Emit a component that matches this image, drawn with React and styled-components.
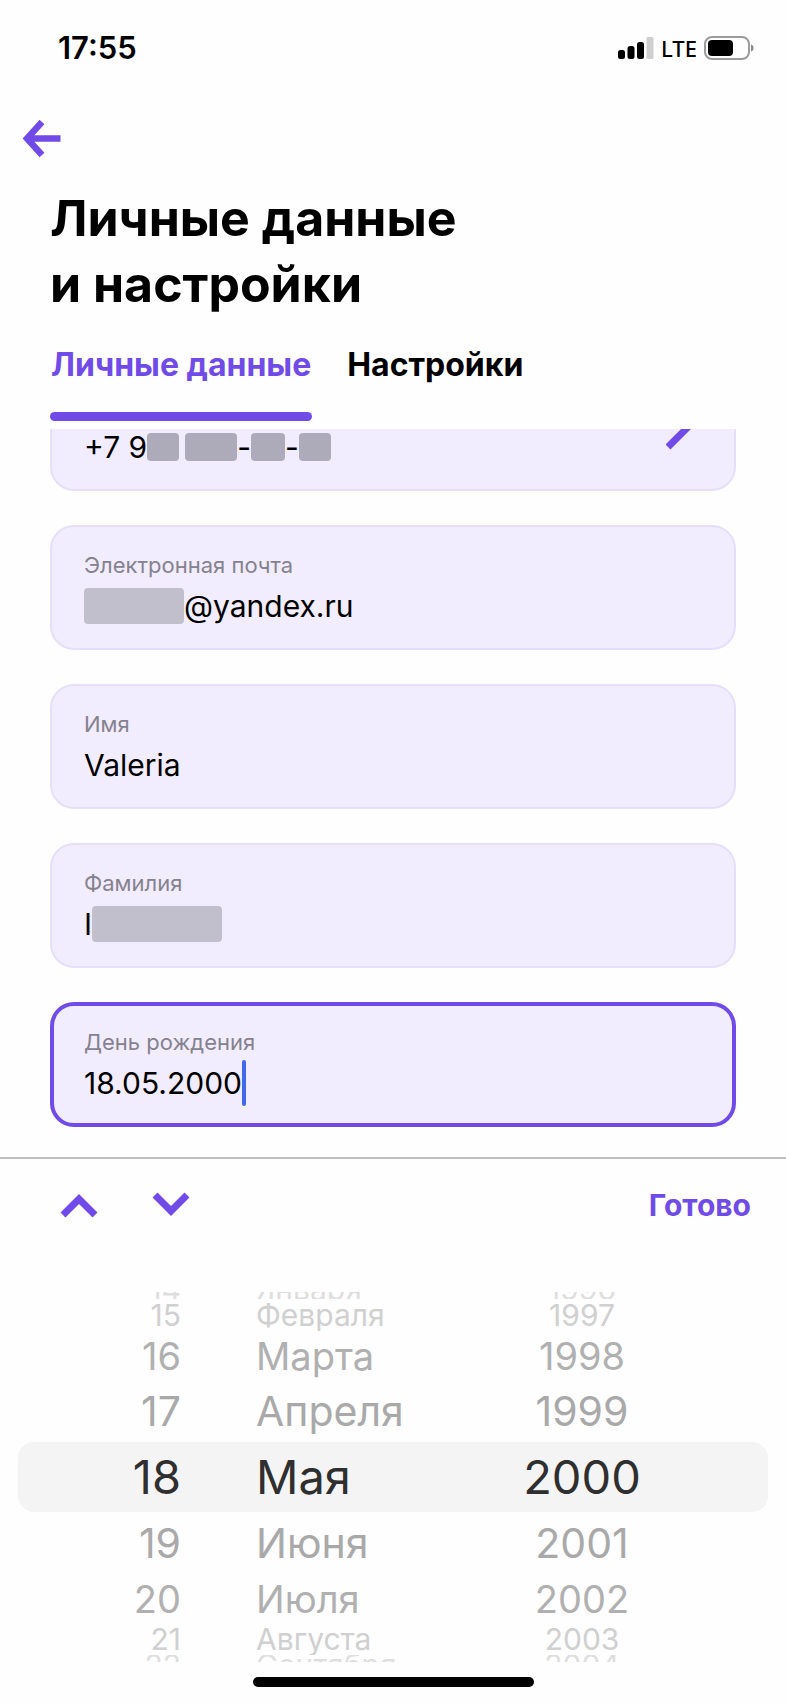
import React, { useState } from "react";
import styled, { createGlobalStyle } from "styled-components";

const PURPLE = "#714be8";

const GlobalStyle = createGlobalStyle`
  * {
    box-sizing: border-box;
  }

  body {
    margin: 0;
    background: #fefefe;
    color: #000;
    font-family: Inter, "Liberation Sans", sans-serif;
  }

  button,
  input {
    margin: 0;
    padding: 0;
    border: 0;
    background: none;
    color: inherit;
    font: inherit;
  }

  button {
    cursor: pointer;
  }
`;

const StatusBar = styled.div`
  display: flex;
  align-items: center;
  justify-content: space-between;
  height: 96px;
  padding: 0 32px 0 58px;
`;

const Clock = styled.time`
  font-size: 31px;
  font-weight: 600;
  line-height: 36px;
`;

const StatusIcons = styled.div`
  display: flex;
  align-items: center;
  gap: 7px;
  font-family: "Noto Sans", sans-serif;
  font-size: 22px;
  font-weight: 500;
  line-height: 28px;
`;

const BackButton = styled.button`
  display: block;
  width: 44px;
  height: 44px;
  margin: 20px 0 20px 20px;

  svg {
    display: block;
  }
`;

const Content = styled.div`
  padding: 0 50px;
`;

const Title = styled.h1`
  margin: 0;
  padding-top: 5px;
  font-size: 50px;
  font-weight: 700;
  line-height: 66px;
`;

const Tabs = styled.nav`
  display: flex;
  gap: 34px;
  margin-top: 28px;
`;

const Tab = styled.a`
  padding: 0 1px 8px;
  color: ${(props) => (props.$active ? PURPLE : "#000")};
  font-size: 32px;
  font-weight: 700;
  line-height: 40px;
  text-decoration: none;

  &::after {
    content: "";
    display: block;
    height: 9px;
    margin: 27px -1px 0;
    border-radius: 5px;
    background: ${(props) => (props.$active ? PURPLE : "transparent")};
  }
`;

const ScrollArea = styled.section`
  overflow: hidden;
`;

/* the list is scrolled half a card down */
const FieldList = styled.form`
  display: flex;
  flex-direction: column;
  gap: 34px;
  margin-top: -63px;
  padding-bottom: 30px;
`;

const Field = styled.div`
  display: flex;
  align-items: center;
  justify-content: space-between;
  height: 125px;
  padding: 6px ${(props) => (props.$active ? 30 : 32)}px 0;
  border: ${(props) =>
    props.$active ? `4px solid ${PURPLE}` : "2px solid #e5dff9"};
  border-radius: 24px;
  background: #f1edfe;
`;

const FieldLabel = styled.label`
  display: block;
  height: 26px;
  color: #85828e;
  font-size: 22px;
  line-height: 26px;
`;

const FieldValue = styled.div`
  display: flex;
  align-items: center;
  height: 46px;
  margin-top: 5px;
  font-size: 30px;
  line-height: 36px;
`;

const TextInput = styled.input`
  field-sizing: content;
  height: 36px;
  outline: none;
`;

const Caret = styled.span`
  width: 4px;
  height: 46px;
  border-radius: 2px;
  background: #4169e8;
`;

const Mask = styled.span`
  width: ${(props) => props.$width}px;
  height: ${(props) => (props.$small ? 28 : 36)}px;
  border-radius: 4px;
  background: ${(props) => (props.$small ? "#adaaba" : "#c2bfcd")};
`;

const PhoneGap = styled.span`
  width: 6px;
`;

const EditButton = styled.button`
  width: 36px;
  height: 36px;

  svg {
    display: block;
  }
`;

const Keyboard = styled.section`
  border-top: 2px solid #bfbfc1;
`;

const Toolbar = styled.div`
  display: flex;
  align-items: center;
  gap: 48px;
  height: 92px;
  padding: 0 35px 0 57px;

  svg {
    display: block;
  }
`;

const DoneButton = styled.button`
  margin-left: auto;
  color: ${PURPLE};
  font-size: 30px;
  font-weight: 700;
  line-height: 36px;
`;

const Wheel = styled.div`
  padding: 41px 18px 0;
`;

const ROWS = {
  0: { height: 70, size: 47, line: 56, color: "#2f2f2f" },
  1: { height: 62, size: 41, line: 48, color: "#a9a9a9" },
  2: { height: 49, size: 38, line: 40, color: "#b0b0b0" },
  3: { height: 32, size: 30, line: 30, color: "#d0d0d0" },
  4: { height: 7, size: 30, line: 20, color: "#dedede" },
};

const rowStyle = (key) => (props) => ROWS[Math.abs(props.$offset)][key];

/* the outermost rows only peek out from behind the edge of the wheel */
const WheelRow = styled.div`
  display: grid;
  grid-template-columns: 163fr 326fr 150fr 111fr;
  grid-template-rows: 100%;
  align-items: ${(props) =>
    props.$offset === -4 ? "end" : props.$offset === 4 ? "start" : "center"};
  height: ${rowStyle("height")}px;
  overflow: hidden;
  border-radius: ${(props) => (props.$offset === 0 ? 16 : 0)}px;
  background: ${(props) => (props.$offset === 0 ? "#f4f4f4" : "none")};
  color: ${rowStyle("color")};
  font-size: ${rowStyle("size")}px;
  line-height: ${rowStyle("line")}px;
`;

const WheelItem = styled.button`
  padding-left: ${(props) => (props.$align === "left" ? 75 : 0)}px;
  text-align: ${(props) => props.$align};
  white-space: nowrap;
`;

const HomeIndicator = styled.div`
  width: 281px;
  height: 10px;
  margin: 15px auto 17px;
  border-radius: 5px;
  background: #000;
`;

const MONTHS = [
  "Января",
  "Февраля",
  "Марта",
  "Апреля",
  "Мая",
  "Июня",
  "Июля",
  "Августа",
  "Сентября",
  "Октября",
  "Ноября",
  "Декабря",
];

const OFFSETS = [-4, -3, -2, -1, 0, 1, 2, 3, 4];

const wrap = (value, count) => (value + count) % count;
const pad = (value) => String(value).padStart(2, "0");

const SignalIcon = () => (
  <svg width="36" height="22" viewBox="0 0 36 22" aria-hidden="true">
    <rect x="0" y="13" width="7" height="9" rx="2.5" />
    <rect x="9.5" y="9" width="7" height="13" rx="2.5" />
    <rect x="19" y="5" width="7" height="17" rx="2.5" />
    <rect x="28.5" y="0" width="7" height="22" rx="1.5" fill="#cfcfcf" />
  </svg>
);

const BatteryIcon = () => (
  <svg width="50" height="24" viewBox="0 0 50 24" aria-hidden="true">
    <rect
      x="1"
      y="1"
      width="44"
      height="22"
      rx="7"
      fill="none"
      stroke="#9b9b9b"
      strokeWidth="2"
    />
    <rect x="4" y="4" width="25" height="16" rx="4" />
    <path d="M47 8.5c3.5 1 3.5 6 0 7z" fill="#8c8c8c" />
  </svg>
);

const ArrowIcon = () => (
  <svg width="44" height="44" viewBox="0 0 44 44" aria-hidden="true">
    <path
      d="M22 6L7 22.500L22 39M7 22.500H40.500"
      fill="none"
      stroke={PURPLE}
      strokeWidth="6.500"
    />
  </svg>
);

const PencilIcon = () => (
  <svg width="36" height="36" viewBox="0 0 36 36" aria-hidden="true">
    <path d="M2 33L33 2" fill="none" stroke={PURPLE} strokeWidth="7" />
  </svg>
);

const ChevronIcon = ({ down }) => (
  <svg width="44" height="28" viewBox="0 0 44 28" aria-hidden="true">
    <path
      d={down ? "M6 4l16 16L38 4" : "M6 24L22 8l16 16"}
      fill="none"
      stroke={PURPLE}
      strokeWidth="7"
    />
  </svg>
);

const App = () => {
  const [email, setEmail] = useState("@yandex.ru");
  const [name, setName] = useState("Valeria");
  const [surname, setSurname] = useState("I");
  const [day, setDay] = useState(18);
  const [month, setMonth] = useState(4);
  const [year, setYear] = useState(2000);

  return (
    <>
      <GlobalStyle />
      <StatusBar>
        <Clock>17:55</Clock>
        <StatusIcons>
          <SignalIcon />
          LTE
          <BatteryIcon />
        </StatusIcons>
      </StatusBar>
      <BackButton type="button" aria-label="Назад">
        <ArrowIcon />
      </BackButton>
      <Content>
        <Title>
          Личные данные
          <br />и настройки
        </Title>
        <Tabs>
          <Tab href="#personal" $active>
            Личные данные
          </Tab>
          <Tab href="#settings">Настройки</Tab>
        </Tabs>
        <ScrollArea>
          <FieldList>
            <Field>
              <div>
                <FieldLabel as="div" />
                <FieldValue>
                  +7 9
                  <Mask $width={32} $small />
                  <PhoneGap />
                  <Mask $width={52} $small />
                  -
                  <Mask $width={34} $small />
                  -
                  <Mask $width={32} $small />
                </FieldValue>
              </div>
              <EditButton type="button" aria-label="Изменить телефон">
                <PencilIcon />
              </EditButton>
            </Field>
            <Field>
              <div>
                <FieldLabel htmlFor="email">Электронная почта</FieldLabel>
                <FieldValue>
                  <Mask $width={100} />
                  <TextInput
                    id="email"
                    value={email}
                    onChange={(e) => setEmail(e.target.value)}
                  />
                </FieldValue>
              </div>
            </Field>
            <Field>
              <div>
                <FieldLabel htmlFor="name">Имя</FieldLabel>
                <FieldValue>
                  <TextInput
                    id="name"
                    value={name}
                    onChange={(e) => setName(e.target.value)}
                  />
                </FieldValue>
              </div>
            </Field>
            <Field>
              <div>
                <FieldLabel htmlFor="surname">Фамилия</FieldLabel>
                <FieldValue>
                  <TextInput
                    id="surname"
                    value={surname}
                    onChange={(e) => setSurname(e.target.value)}
                  />
                  <Mask $width={130} />
                </FieldValue>
              </div>
            </Field>
            <Field $active>
              <div>
                <FieldLabel htmlFor="birthday">День рождения</FieldLabel>
                <FieldValue>
                  <TextInput
                    id="birthday"
                    readOnly
                    value={`${pad(day)}.${pad(month + 1)}.${year}`}
                  />
                  <Caret />
                </FieldValue>
              </div>
            </Field>
          </FieldList>
        </ScrollArea>
      </Content>
      <Keyboard>
        <Toolbar>
          <button type="button" aria-label="Предыдущее поле">
            <ChevronIcon />
          </button>
          <button type="button" aria-label="Следующее поле">
            <ChevronIcon down />
          </button>
          <DoneButton type="button">Готово</DoneButton>
        </Toolbar>
        <Wheel>
          {OFFSETS.map((offset) => {
            const rowDay = wrap(day - 1 + offset, 31) + 1;
            const rowMonth = wrap(month + offset, 12);
            const rowYear = year + offset;

            return (
              <WheelRow key={offset} $offset={offset}>
                <WheelItem $align="right" onClick={() => setDay(rowDay)}>
                  {rowDay}
                </WheelItem>
                <WheelItem $align="left" onClick={() => setMonth(rowMonth)}>
                  {MONTHS[rowMonth]}
                </WheelItem>
                <WheelItem $align="center" onClick={() => setYear(rowYear)}>
                  {rowYear}
                </WheelItem>
              </WheelRow>
            );
          })}
        </Wheel>
        <HomeIndicator />
      </Keyboard>
    </>
  );
};

export default App;
